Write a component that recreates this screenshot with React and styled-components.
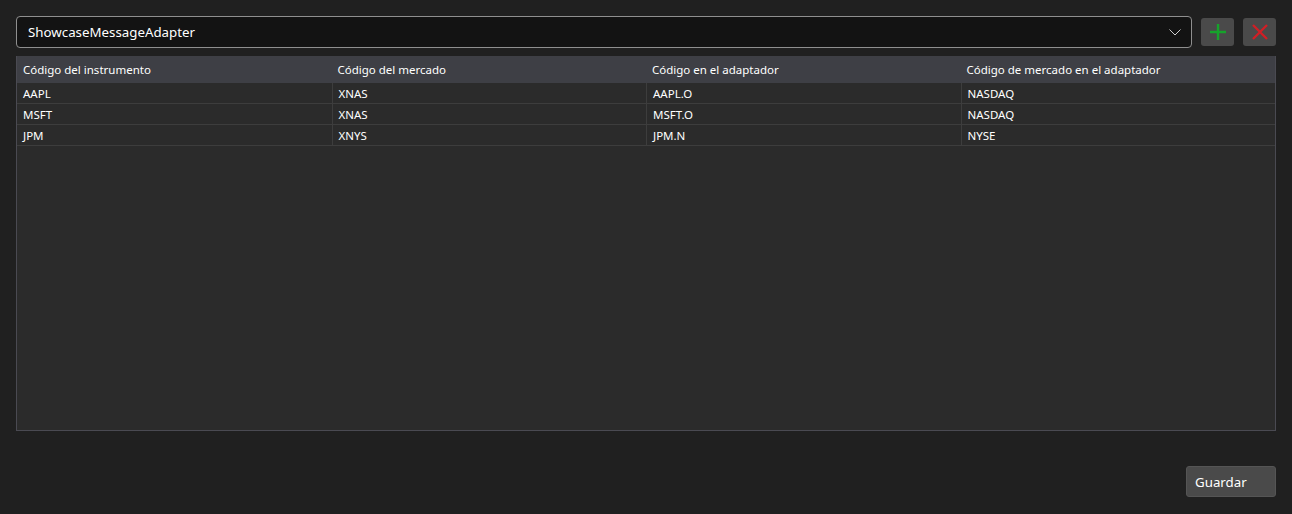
import React from "react";
import styled, { createGlobalStyle } from "styled-components";

const Global = createGlobalStyle`
  html, body { margin: 0; padding: 0; background: #202020; }
  body { font-family: "Noto Sans", "Open Sans", sans-serif; color: #fff; }
  * { box-sizing: border-box; }
`;

const Page = styled.div`
  height: 514px;
  padding: 16px 16px 17px 16px;
  display: flex;
  flex-direction: column;
`;

const Toolbar = styled.div`
  display: flex;
  align-items: center;
  gap: 9px;
  height: 32px;
`;

const Combo = styled.div`
  flex: 1;
  height: 32px;
  background: #131313;
  border: 1px solid #8f8f8f;
  border-radius: 4px;
  display: flex;
  align-items: center;
  justify-content: space-between;
  padding: 0 10px 0 11px;
  font-size: 13.3px;
  color: #fff;
`;

const IconButton = styled.button`
  width: 33px;
  height: 28px;
  background: #4a4a4a;
  border: none;
  border-radius: 3px;
  display: flex;
  align-items: center;
  justify-content: center;
  padding: 0;
`;

const Table = styled.div`
  margin-top: 8px;
  height: 375px;
  border: 1px solid #4a4a52;
  border-top: none;
  background: #2b2b2b;
  display: flex;
  flex-direction: column;
`;

const Row = styled.div`
  display: grid;
  grid-template-columns: repeat(4, 1fr);
  height: ${(p) => (p.$header ? "27px" : "21px")};
  background: ${(p) => (p.$header ? "#3e3f45" : "#2b2b2b")};
  border-bottom: ${(p) => (p.$header ? "none" : "1px solid #3d3d3d")};
`;

const Cell = styled.div`
  display: flex;
  align-items: center;
  padding: 0 6px;
  font-size: 11.5px;
  color: #fff;
  font-weight: 400;
  border-left: ${(p) => (p.$first || p.$header ? "none" : "1px solid #3d3d3d")};
  white-space: nowrap;
  overflow: hidden;
`;

const Footer = styled.div`
  margin-top: auto;
  display: flex;
  justify-content: flex-end;
`;

const SaveButton = styled.button`
  width: 90px;
  height: 31px;
  background: #4a4a4a;
  border: 1px solid #555;
  border-radius: 3px;
  color: #fff;
  font-family: "Noto Sans", "Open Sans", sans-serif;
  font-size: 13.3px;
  text-align: left;
  padding: 0 8px;
`;

const headers = [
  "Código del instrumento",
  "Código del mercado",
  "Código en el adaptador",
  "Código de mercado en el adaptador",
];

const rows = [
  ["AAPL", "XNAS", "AAPL.O", "NASDAQ"],
  ["MSFT", "XNAS", "MSFT.O", "NASDAQ"],
  ["JPM", "XNYS", "JPM.N", "NYSE"],
];

export default function App() {
  return (
    <>
      <Global />
      <Page>
        <Toolbar>
          <Combo>
            <span>ShowcaseMessageAdapter</span>
            <svg width="12" height="7" viewBox="0 0 12 7">
              <path d="M0.5 0.5 L6 6 L11.5 0.5" fill="none" stroke="#cfcfcf" strokeWidth="1" />
            </svg>
          </Combo>
          <IconButton>
            <svg width="18" height="18" viewBox="0 0 18 18">
              <path d="M9 1 V17 M1 9 H17" stroke="#16a32b" strokeWidth="2.4" />
            </svg>
          </IconButton>
          <IconButton>
            <svg width="18" height="18" viewBox="0 0 18 18">
              <path d="M2 2 L16 16 M16 2 L2 16" stroke="#d01f25" strokeWidth="2.4" />
            </svg>
          </IconButton>
        </Toolbar>
        <Table>
          <Row $header>
            {headers.map((h) => (
              <Cell $header key={h}>{h}</Cell>
            ))}
          </Row>
          {rows.map((r, i) => (
            <Row key={i}>
              {r.map((c, j) => (
                <Cell key={j} $first={j === 0}>{c}</Cell>
              ))}
            </Row>
          ))}
        </Table>
        <Footer>
          <SaveButton>Guardar</SaveButton>
        </Footer>
      </Page>
    </>
  );
}
